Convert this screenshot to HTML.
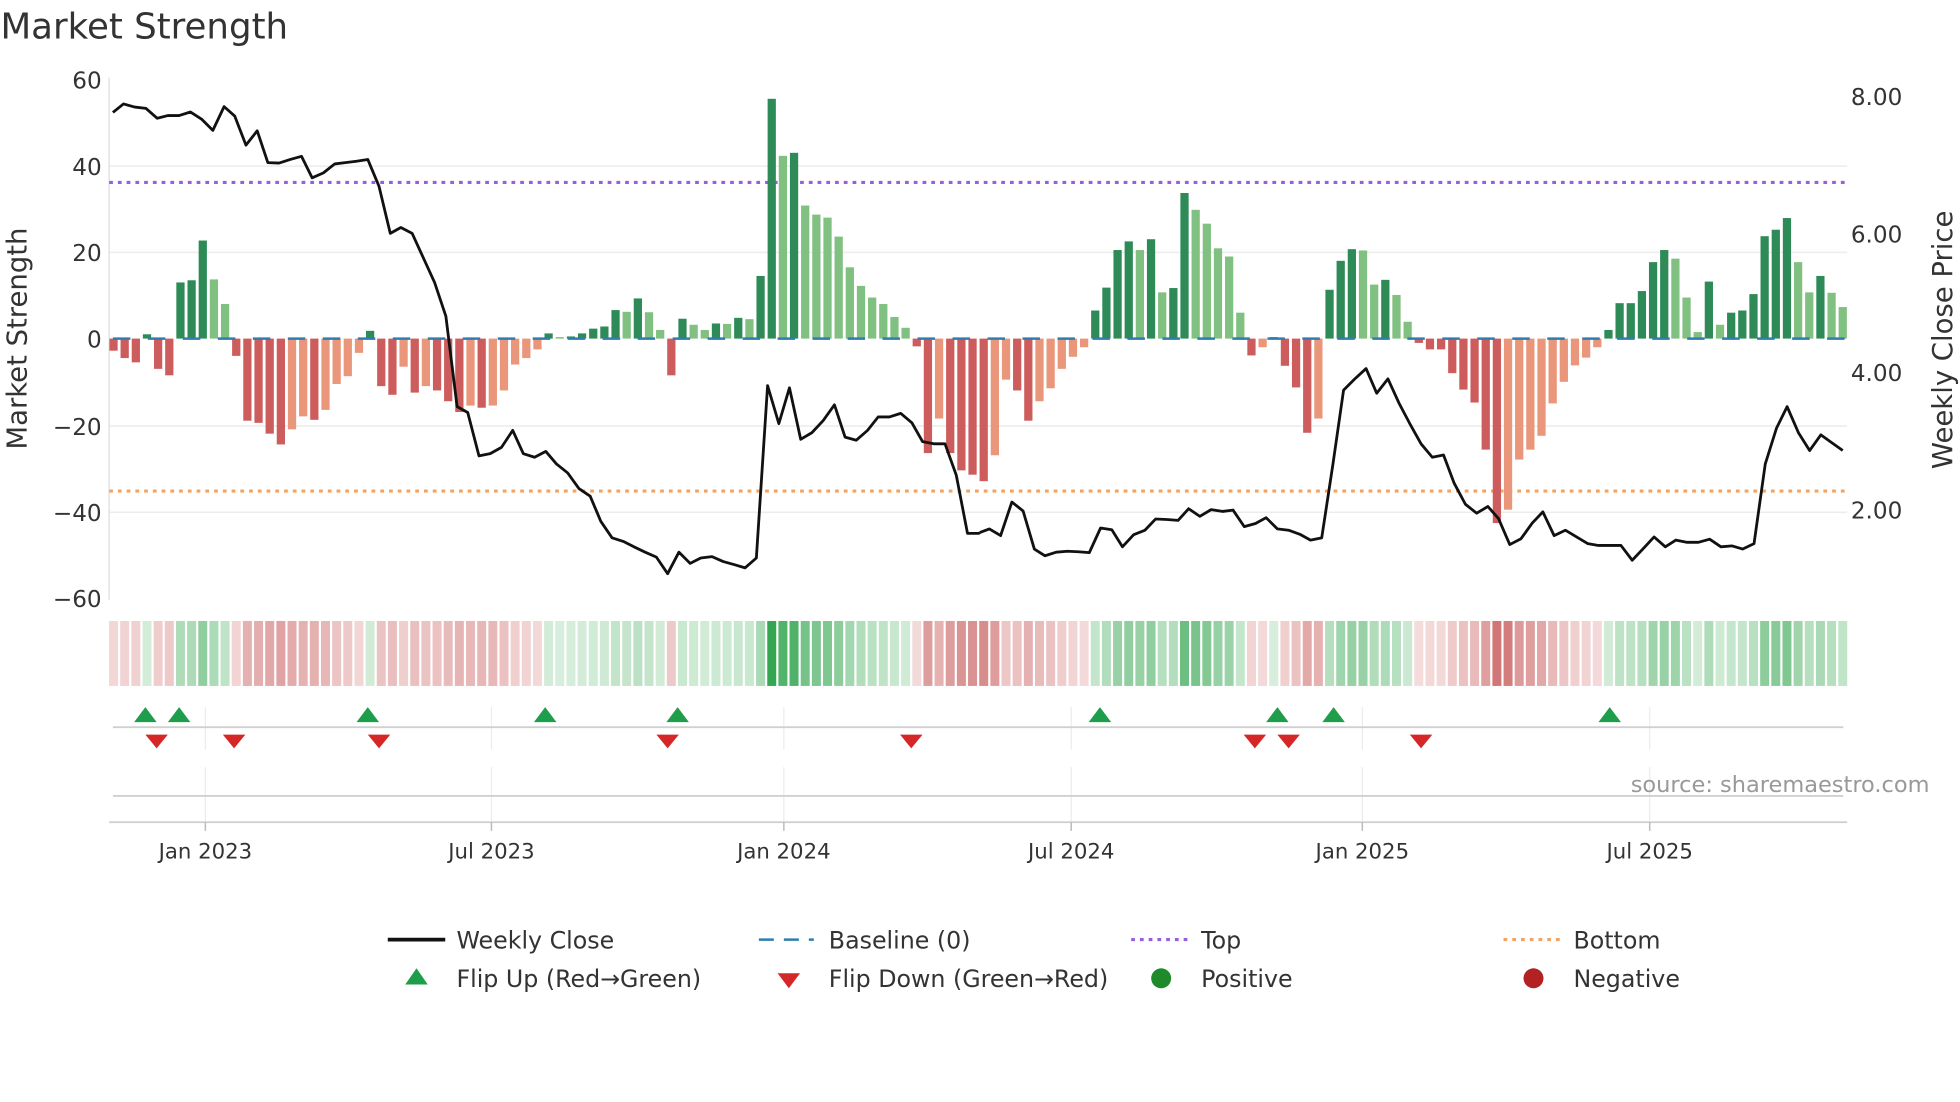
<!DOCTYPE html>
<html><head><meta charset="utf-8"><style>
html,body{margin:0;padding:0;background:#fff;width:1960px;height:1102px;overflow:hidden}
svg{display:block}
text{font-family:"DejaVu Sans","Liberation Sans",sans-serif;fill:#333}
</style></head><body>
<svg id="s" width="1960" height="1102" viewBox="0 0 1568 882" xmlns="http://www.w3.org/2000/svg">
<text x="0" y="31" font-size="28.5">Market Strength</text>
<g stroke="#ececec" stroke-width="1.2">
<line x1="87" x2="1478" y1="133" y2="133"/><line x1="87" x2="1478" y1="202" y2="202"/>
<line x1="87" x2="1478" y1="341" y2="341"/><line x1="87" x2="1478" y1="410" y2="410"/>
</g>
<line x1="87" x2="87" y1="62" y2="480" stroke="#e4e4e4" stroke-width="1.2"/>
<g font-size="18.5" text-anchor="end">
<text x="81" y="71">60</text><text x="81" y="140">40</text><text x="81" y="209">20</text>
<text x="81" y="278">0</text><text x="81" y="348">−20</text><text x="81" y="417">−40</text><text x="81" y="486">−60</text>
</g>
<g font-size="18.5">
<text x="1481" y="84">8.00</text><text x="1481" y="194">6.00</text><text x="1481" y="305">4.00</text><text x="1481" y="415">2.00</text>
</g>
<text transform="translate(21,271) rotate(-90)" font-size="22" text-anchor="middle">Market Strength</text>
<text transform="translate(1562,272) rotate(-90)" font-size="22" text-anchor="middle">Weekly Close Price</text>
<line x1="87" x2="1478" y1="146" y2="146" stroke="#9b5de0" stroke-width="2.5" stroke-dasharray="3 4"/>
<line x1="87" x2="1478" y1="393" y2="393" stroke="#f4a460" stroke-width="2.5" stroke-dasharray="3 4"/>
<g id="bars"></g>
<line x1="90" x2="1478" y1="271" y2="271" stroke="#2f7cb0" stroke-width="2" stroke-dasharray="14 14"/>
<g fill="none" stroke="#111" stroke-width="2.8" stroke-linejoin="round">
<polyline vector-effect="non-scaling-stroke" transform="translate(0,-1.4) scale(0.5,0.3584)" points="180,255 197,236 215,243 233,246 251,268 268,262 286,262 304,254 322,270 340,295 358,242 375,263 393,328 411,296 428,367 446,368 464,360 482,353 499,401 517,390 535,370 552,367 570,364 588,360 606,420 624,525 641,512 659,525 677,580 695,635 713,710 731,912 748,925 766,1022 784,1017 802,1003 820,965 837,1017 855,1025 873,1012 890,1040 908,1060 926,1095 944,1112 961,1168 979,1205 997,1213 1014,1225 1032,1237 1050,1248 1068,1285 1086,1237 1104,1262 1121,1250 1139,1247 1157,1258 1175,1265 1192,1272 1210,1250 1228,865 1246,950 1263,870 1281,985 1299,970 1317,943 1335,908 1352,980 1370,987 1388,965 1405,935 1423,935 1441,927 1459,948 1476,990 1494,995 1512,995 1530,1065 1548,1195 1566,1195 1568,1193"/>
<polyline vector-effect="non-scaling-stroke" transform="translate(784,-1.4) scale(0.5,0.3584)" points="0,1193 15,1185 33,1200 51,1125 69,1145 87,1230 104,1245 122,1237 140,1235 157,1236 175,1238 193,1183 211,1187 228,1225 246,1198 264,1188 281,1163 299,1164 317,1166 334,1140 352,1157 370,1142 388,1146 405,1143 423,1180 441,1173 458,1160 476,1185 494,1188 512,1197 529,1210 547,1205 565,1040 582,875 600,850 618,827 635,882 653,850 671,905 688,950 706,995 724,1025 742,1020 759,1083 777,1130 795,1150 813,1135 830,1162 848,1220 866,1207 884,1172 901,1147 919,1200 937,1188 955,1203 973,1218 990,1222 1008,1222 1026,1222 1044,1255 1061,1230 1079,1203 1097,1225 1114,1210 1132,1215 1150,1215 1168,1208 1186,1225 1204,1223 1221,1230 1239,1218 1257,1040 1275,960 1292,912 1310,970 1328,1010 1346,975 1363,992 1381,1010"/>
</g>
<g id="strip"></g>
<g stroke="#ececec" stroke-width="1">
<line x1="164" x2="164" y1="566" y2="600"/><line x1="393" x2="393" y1="566" y2="600"/><line x1="627" x2="627" y1="566" y2="600"/><line x1="857" x2="857" y1="566" y2="600"/><line x1="1090" x2="1090" y1="566" y2="600"/><line x1="1320" x2="1320" y1="566" y2="600"/>
<line x1="164" x2="164" y1="614" y2="658"/><line x1="393" x2="393" y1="614" y2="658"/><line x1="627" x2="627" y1="614" y2="658"/><line x1="857" x2="857" y1="614" y2="658"/><line x1="1090" x2="1090" y1="614" y2="658"/><line x1="1320" x2="1320" y1="614" y2="658"/>
</g>
<line x1="90" x2="1475" y1="582" y2="582" stroke="#d0d0d0" stroke-width="1.5"/>
<line x1="90" x2="1475" y1="637" y2="637" stroke="#d0d0d0" stroke-width="1.5"/>
<line x1="87" x2="1478" y1="658" y2="658" stroke="#d0d0d0" stroke-width="1.5"/>
<g stroke="#bbb" stroke-width="1.2">
<line x1="164" x2="164" y1="658" y2="665"/><line x1="393" x2="393" y1="658" y2="665"/><line x1="627" x2="627" y1="658" y2="665"/><line x1="857" x2="857" y1="658" y2="665"/><line x1="1090" x2="1090" y1="658" y2="665"/><line x1="1320" x2="1320" y1="658" y2="665"/>
</g>
<g id="flips"></g>
<text x="1544" y="634" font-size="18" text-anchor="end" style="fill:#999">source: sharemaestro.com</text>
<g font-size="17" text-anchor="middle">
<text x="164" y="687">Jan 2023</text><text x="393" y="687">Jul 2023</text><text x="627" y="687">Jan 2024</text>
<text x="857" y="687">Jul 2024</text><text x="1090" y="687">Jan 2025</text><text x="1320" y="687">Jul 2025</text>
</g>
<g font-size="19">
<line x1="310" x2="356" y1="752" y2="752" stroke="#111" stroke-width="3"/>
<text x="365" y="759">Weekly Close</text>
<line x1="607" x2="651" y1="752" y2="752" stroke="#2f7cb0" stroke-width="2" stroke-dasharray="12 8"/>
<text x="663" y="759">Baseline (0)</text>
<line x1="905" x2="950" y1="752" y2="752" stroke="#9b5de0" stroke-width="2.5" stroke-dasharray="3 4"/>
<text x="961" y="759">Top</text>
<line x1="1203" x2="1248" y1="752" y2="752" stroke="#f4a460" stroke-width="2.5" stroke-dasharray="3 4"/>
<text x="1259" y="759">Bottom</text>
<polygon points="324,788 342,788 333,775" fill="#1e9e4a"/>
<text x="365" y="790">Flip Up (Red→Green)</text>
<polygon points="622,779 640,779 631,791" fill="#d62728"/>
<text x="663" y="790">Flip Down (Green→Red)</text>
<circle cx="929" cy="783" r="8" fill="#1f8a2a"/>
<text x="961" y="790">Positive</text>
<circle cx="1227" cy="783" r="8" fill="#b22222"/>
<text x="1259" y="790">Negative</text>
</g>
</svg>
<script>
var v=[-2.8,-4.5,-5.5,1,-7,-8.5,13,13.5,22.7,13.7,8,-4,-19,-19.5,-22,-24.5,-21,-18,-18.8,-16.5,-10.5,-8.7,-3.3,1.8,-11,-13,-6.5,-12.5,-11,-12,-14.5,-17,-15.5,-16,-15.5,-12,-6,-4.5,-2.5,1.2,0.3,0.5,1.2,2.3,2.8,6.6,6.2,9.3,6.1,2,-8.5,4.6,3.2,2,3.5,3.4,4.8,4.5,14.5,55.5,42.3,43,30.8,28.7,28,23.6,16.5,12.2,9.5,8,5,2.5,-1.8,-26.5,-18.5,-26.5,-30.5,-31.5,
-33,-27,-9.5,-12,-19,-14.5,-11.5,-7,-4.2,-2,6.5,11.8,20.5,22.5,20.5,23,10.7,11.7,33.7,29.8,26.6,20.9,19,6,-3.9,-2,0.2,-6.3,-11.3,-21.8,-18.5,11.3,18,20.7,20.4,12.5,13.6,10.1,3.9,-1,-2.5,-2.5,-8,-11.8,-14.8,-25.7,-42.7,-39.6,-28,-25.7,-22.5,-15,-10,-6.2,-4.4,-2,2,8.2,8.2,11,17.7,20.5,18.5,9.5,1.5,13.2,3.2,6,6.5,10.3,23.7,25.2,27.9,17.7,10.7,14.5,10.6,7.3];
var NS="http://www.w3.org/2000/svg";
function el(t,a,p){var e=document.createElementNS(NS,t);for(var k in a)e.setAttribute(k,a[k]);p.appendChild(e);return e;}
var bars=document.getElementById('bars'),strip=document.getElementById('strip'),fl=document.getElementById('flips');
var x0=90.5,pitch=(1474.5-90.5)/155,sc=3.458;
function mix(a,b,t){var r=[];for(var i=0;i<3;i++)r.push(Math.round(a[i]+(b[i]-a[i])*t));return 'rgb('+r.join(',')+')';}
for(var i=0;i<v.length;i++){
 var x=x0+i*pitch,val=v[i],p=i?v[i-1]:0,c;
 if(val>=0)c=(val>=p)?'#2e8b57':'#80c080';else c=(val<=p)?'#cd5c5c':'#e9967a';
 var h=Math.abs(val)*sc; if(h<1.2)h=1.2;
 el('rect',{x:x-3.3,y:val>=0?271-h:271,width:6.6,height:h,fill:c},bars);
 var t=Math.min(Math.abs(val)/52,1);
 var col=val>=0?mix([215,238,220],[52,165,80],t):mix([245,222,222],[200,95,95],t);
 el('rect',{x:x-3.6,y:497,width:7.2,height:52,fill:col},strip);
}
[116,143,294,436,542,880,1022,1067,1288].forEach(function(x){el('polygon',{points:(x-9)+',578 '+(x+9)+',578 '+x+',566',fill:'#1e9e4a'},fl);});
[125,187,303,534,729,1004,1031,1137].forEach(function(x){el('polygon',{points:(x-9)+',588 '+(x+9)+',588 '+x+',599',fill:'#d62728'},fl);});
</script>
</body></html>
